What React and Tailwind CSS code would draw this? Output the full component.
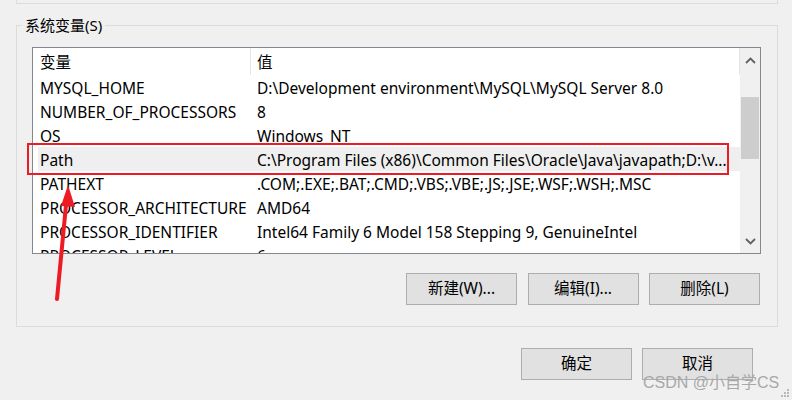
import React from "react";

const rows = [
  { name: "MYSQL_HOME", value: "D:\\Development environment\\MySQL\\MySQL Server 8.0" },
  { name: "NUMBER_OF_PROCESSORS", value: "8" },
  { name: "OS", value: "Windows_NT" },
  { name: "Path", value: "C:\\Program Files (x86)\\Common Files\\Oracle\\Java\\javapath;D:\\v...", selected: true },
  { name: "PATHEXT", value: ".COM;.EXE;.BAT;.CMD;.VBS;.VBE;.JS;.JSE;.WSF;.WSH;.MSC" },
  { name: "PROCESSOR_ARCHITECTURE", value: "AMD64" },
  { name: "PROCESSOR_IDENTIFIER", value: "Intel64 Family 6 Model 158 Stepping 9, GenuineIntel" },
  { name: "PROCESSOR_LEVEL", value: "6" },
];

const font = { fontFamily: '"Noto Sans", "Noto Sans CJK SC", sans-serif' };

const WinButton = ({ children }) => (
  <button className="w-[111px] h-[32px] bg-[#e1e1e1] border border-[#adadad] text-[15.5px] text-black flex items-center justify-center">
    {children}
  </button>
);

const ScrollBar = () => (
  <div className="w-[20px] bg-[#f0f0f0] flex flex-col items-center">
    <div className="h-[24px] w-full flex items-center justify-center">
      <svg width="11" height="7" viewBox="0 0 11 7">
        <path d="M1 6 L5.5 1.5 L10 6" fill="none" stroke="#606060" strokeWidth="1.8" />
      </svg>
    </div>
    <div className="h-[25px]" />
    <div className="w-[18px] h-[62px] bg-[#cdcdcd]" />
    <div className="flex-1" />
    <div className="h-[24px] w-full flex items-center justify-center">
      <svg width="11" height="7" viewBox="0 0 11 7">
        <path d="M1 1 L5.5 5.5 L10 1" fill="none" stroke="#606060" strokeWidth="1.8" />
      </svg>
    </div>
  </div>
);

export default function App() {
  return (
    <div className="relative w-[792px] h-[400px] bg-[#f0f0f0] overflow-hidden text-black" style={font}>
      {/* previous group box, cut off */}
      <div className="ml-[16px] w-[762px] h-[4px] border-x border-b border-[#dcdcdc]" />

      {/* 系统变量 group */}
      <div className="relative ml-[16px] mt-[21px] w-[762px] h-[302px] border border-[#dcdcdc] pt-[21px] pl-[15px]">
        <span className="absolute left-[5px] top-[-11px] px-[3px] bg-[#f0f0f0] text-[15px] leading-[20px]">
          系统变量(S)
        </span>

        <div className="w-[729px] h-[207px] border border-[#828790] bg-white flex">
          <div className="flex-1 overflow-hidden">
            <div className="h-[27px] flex items-center text-[15.5px]">
              <div className="w-[218px] h-full pl-[7px] pt-[2px] flex items-center border-r border-[#e5e5e5]">变量</div>
              <div className="flex-1 h-full pl-[6px] pt-[2px] flex items-center border-r border-[#e5e5e5]">值</div>
            </div>
            {rows.map((r) => (
              <div
                key={r.name}
                className={`h-[24px] pt-[3px] flex items-center text-[15.5px] whitespace-nowrap ${r.selected ? "ml-[5px] bg-[#efefef]" : ""}`}
              >
                <div className={`${r.selected ? "w-[213px] pl-[2px]" : "w-[218px] pl-[7px]"}`}>{r.name}</div>
                <div className="pl-[6px]">{r.value}</div>
              </div>
            ))}
          </div>
          <ScrollBar />
        </div>

        <div className="mt-[19px] w-[728px] flex justify-end gap-[10.5px]">
          <WinButton>新建(W)...</WinButton>
          <WinButton>编辑(I)...</WinButton>
          <WinButton>删除(L)</WinButton>
        </div>
      </div>

      {/* dialog buttons */}
      <div className="mt-[21px] mr-[39px] flex justify-end gap-[10px]">
        <WinButton>确定</WinButton>
        <WinButton>取消</WinButton>
      </div>

      {/* annotation: red box + arrow */}
      <div className="absolute left-[27px] top-[143px] w-[702px] h-[32px] border-2 border-[#ed1c24]" />
      <svg className="absolute left-0 top-0" width="792" height="400">
        <line x1="57" y1="299" x2="66.5" y2="200" stroke="#ed1c24" strokeWidth="4" strokeLinecap="round" />
        <polygon points="68,185 61,206 75,207" fill="#ed1c24" />
      </svg>

      {/* watermark */}
      <span className="absolute left-[643px] top-[371px] text-[16px] leading-[24px] text-[#a8a8a8] whitespace-nowrap" style={{ fontFamily: '"Liberation Sans", "Noto Sans CJK SC", sans-serif' }}>
        CSDN @小自学CS
      </span>

      {/* resize grip */}
      <svg className="absolute right-[2px] bottom-[2px]" width="9" height="9" viewBox="0 0 9 9">
        <rect x="6" y="0" width="2" height="2" fill="#b8b8b8" />
        <rect x="3" y="3" width="2" height="2" fill="#b8b8b8" />
        <rect x="6" y="3" width="2" height="2" fill="#b8b8b8" />
        <rect x="0" y="6" width="2" height="2" fill="#b8b8b8" />
        <rect x="3" y="6" width="2" height="2" fill="#b8b8b8" />
        <rect x="6" y="6" width="2" height="2" fill="#b8b8b8" />
      </svg>
    </div>
  );
}
